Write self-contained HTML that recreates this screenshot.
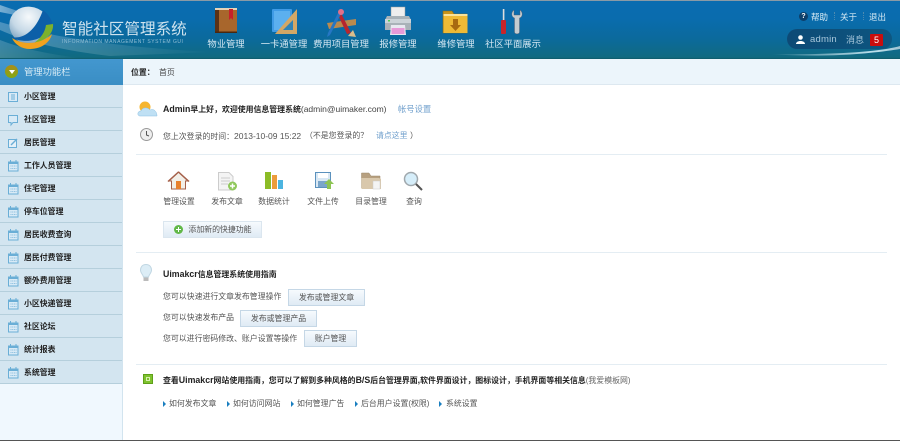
<!DOCTYPE html>
<html lang="zh"><head><meta charset="utf-8"><title>智能社区管理系统</title>
<style>
html,body{margin:0;padding:0;width:900px;height:441px;overflow:hidden;background:#fff}
body{position:relative;font-family:"Liberation Sans","Noto Sans CJK SC",sans-serif;font-size:7.9px;color:#555;filter:blur(.3px)}
.a{position:absolute;white-space:nowrap;line-height:12px}
svg{position:absolute;overflow:visible}
#hd{position:absolute;left:0;top:0;width:900px;height:59px;background:linear-gradient(#0a6cb0 0,#0a6cae 30%,#0b6a9c 65%,#116a80 97%,#0f5a68 100%);border-top:1px solid #8a9aa6;box-sizing:border-box;overflow:hidden}
.n{color:#d5e8f2;font-size:9.300px;text-align:center;top:37px}
.m{position:absolute;left:0;width:122px;height:22px;background:#d3e5f0;border-bottom:1px solid #b5cfdc}
.m span{position:absolute;left:24px;top:6px;font-size:7.900px;line-height:12px;color:#222;font-weight:bold;white-space:nowrap}
.m svg{left:8px;top:6px}
.q{color:#555;font-size:7.900px;text-align:center;top:196px;width:44px}
.b{position:absolute;box-sizing:border-box;background:linear-gradient(#f6fafd,#dfeaf4);border:1px solid #c5d7e6;color:#555;text-align:center;font-size:7.900px;white-space:nowrap}
.hr{position:absolute;left:136px;width:751px;height:1px;background:#e4edf3}
.k{font-weight:bold;color:#222}
.e{font-size:8.800px}
.f{font-size:8.500px}
.l{color:#555;top:398px}
.t{position:absolute;top:401px;width:0;height:0;border-left:3px solid #1a7fc0;border-top:3px solid transparent;border-bottom:3px solid transparent}
</style></head><body>
<svg width="0" height="0" style="left:0;top:0"><defs><g id="cal"><rect x=".5" y="2" width="9.500" height="9" fill="#d8eaf6" stroke="#6aaed6"/><rect x="0" y="1.500" width="10.500" height="2.500" fill="#6aaed6"/><path d="M2.500 0V2.500M8 0V2.500" stroke="#6aaed6"/><path d="M2.500 6H8.500M2.500 8.500H8.500" stroke="#8abede" stroke-dasharray="1 .7"/></g></defs></svg>
<div id="hd">
<svg style="left:0;top:-1px" width="900" height="59" viewBox="0 0 900 59">
<defs>
<linearGradient id="g1" x1="0" y1="0" x2="1" y2="0"><stop offset="0" stop-color="#fff" stop-opacity=".75"/><stop offset="1" stop-color="#fff" stop-opacity="0"/></linearGradient>
<radialGradient id="ball" cx=".38" cy=".3" r=".75"><stop offset="0" stop-color="#f6f9fb"/><stop offset=".55" stop-color="#c5d8e6"/><stop offset="1" stop-color="#6b97b8"/></radialGradient>
<linearGradient id="gl" x1="0" y1="0" x2="1" y2="0"><stop offset="0" stop-color="#fff" stop-opacity="0"/><stop offset=".8" stop-color="#cfeef8" stop-opacity=".9"/><stop offset="1" stop-color="#fff" stop-opacity=".6"/></linearGradient>
</defs>
<path d="M0 22Q80 46 215 52L110 56Q40 48 0 30Z" fill="url(#g1)" opacity=".35"/>
<path d="M0 5L50 22L0 12Z" fill="url(#g1)" opacity=".6"/>
<path d="M0 40Q30 52 80 58H0Z" fill="url(#g1)" opacity=".25"/>
<ellipse cx="30" cy="26" rx="21" ry="19" fill="url(#ball)" transform="rotate(25 30 26)"/>
<path d="M43 10C48 14 53 20 52 27C46 38 28 46 10 37C24 40 36 30 43 10Z" fill="#0d5fa8"/>
<path d="M46 25L53 24C54 33 46 41 34 43C41 38 45 32 46 25Z" fill="#7cb22c"/>
<path d="M12 38C24 46 42 44 52 34C50 42 42 49 30 49C22 49 15 45 12 38Z" fill="#f0a21e"/>
<path d="M770 54C830 55 880 52 900 46V49C870 54 820 58 770 54Z" fill="url(#gl)"/>
</svg>
<div class="a" style="left:62px;top:19px;font-size:15.600px;line-height:20px;color:#cfe3ee">智能社区管理系统</div>
<div class="a" style="left:62px;top:37px;font-size:5px;line-height:8px;color:#8fbdd4;letter-spacing:.53px">INFORMATION MANAGEMENT SYSTEM GUI</div>

<svg style="left:215px;top:7px" width="23" height="26"><rect width="22" height="25" rx="1" fill="#a8662c"/><rect width="4" height="25" fill="#5a3216"/><rect y="0" width="22" height="2" fill="#e4d3b8"/><path d="M14 1h4v11l-2-2-2 2z" fill="#c6202a"/><rect y="23.500" width="22" height="1.500" fill="#4a2810"/></svg>
<svg style="left:272px;top:8px" width="26" height="26"><rect width="20" height="23" rx="1" fill="#3f9be6"/><rect x="2" y="2" width="16" height="19" fill="#5cb0ef"/><path d="M25 0V25H3Z" fill="#d3a766"/><path d="M21 11V21H11Z" fill="#2e83b8"/></svg>
<svg style="left:326px;top:7px" width="32" height="30"><path d="M1 15L30 11V17L3 21Z" fill="#b98a4e"/><path d="M15 5L25 25L21 26L12 7Z" fill="#b8252e"/><path d="M27 22L30 29L22 28Z" fill="#d9bd8c"/><path d="M16 4L4 27L1 29L2 25L13 3Z" fill="#2676c4"/><circle cx="15" cy="4" r="3" fill="#e0708a"/></svg>
<svg style="left:384px;top:6px" width="28" height="29"><rect x="7" y="0" width="14" height="11" fill="#eee" stroke="#999" stroke-width=".5"/><path d="M3 9H25L27 13V23H1V13Z" fill="#a9b2b8"/><rect x="1" y="12" width="26" height="4" fill="#ccd3d8"/><rect x="4" y="13" width="2" height="1.500" fill="#5c5"/><path d="M7 18H21L22 28H6Z" fill="#e8e8f0"/><rect x="7.500" y="21" width="13" height="6" fill="#e79ad8"/></svg>
<svg style="left:442px;top:8px" width="27" height="25"><path d="M1 2H10L12 5H25V24H1Z" fill="#c9951c" stroke="#8a6a10" stroke-width=".6"/><rect x="1.500" y="7" width="24" height="17" fill="#eeba36"/><rect x="1.500" y="5" width="24" height="2" fill="#f9e29a"/><path d="M11 10H16V16H19L13.500 22L8 16H11Z" fill="#a86a10"/></svg>
<svg style="left:500px;top:8px" width="24" height="26"><rect x="2.800" y="0" width="1.600" height="11" fill="#ddd"/><rect x="1" y="11" width="5" height="14" rx="1" fill="#c9252a"/><path d="M14 1C11 3 11 8 14.500 9V23C14.500 25.500 19.500 25.500 19.500 23V9C23 8 23 3 20 1V6H14Z" fill="#c4ccd0" stroke="#556" stroke-width=".4"/></svg>

<div class="a n" style="left:196px;width:60px">物业管理</div>
<div class="a n" style="left:254px;width:60px">一卡通管理</div>
<div class="a n" style="left:311px;width:60px">费用项目管理</div>
<div class="a n" style="left:368px;width:60px">报修管理</div>
<div class="a n" style="left:426px;width:60px">维修管理</div>
<div class="a n" style="left:483px;width:60px">社区平面展示</div>

<div class="a" style="left:799px;top:11px;width:9px;height:9px;border-radius:5px;background:#0d3f6a;color:#fff;font-size:7px;line-height:9px;text-align:center;font-weight:bold">?</div>
<div class="a" style="left:811px;top:10px;color:#d9ebf4;font-size:8.500px">帮助</div>
<div class="a" style="left:833.500px;top:11px;width:1px;height:8px;border-left:1px dotted #4d8ab0;"></div>
<div class="a" style="left:840px;top:10px;color:#d9ebf4;font-size:8.500px">关于</div>
<div class="a" style="left:862.500px;top:11px;width:1px;height:8px;border-left:1px dotted #4d8ab0;"></div>
<div class="a" style="left:869px;top:10px;color:#d9ebf4;font-size:8.500px">退出</div>
<div class="a" style="left:787px;top:28px;width:105px;height:20px;border-radius:10px;background:linear-gradient(90deg,#0d4a76,#0d5680)"></div>
<svg style="left:796px;top:34px" width="9" height="9"><circle cx="4.500" cy="2.500" r="2.300" fill="#fff"/><path d="M0 9C0 5 9 5 9 9Z" fill="#fff"/></svg>
<div class="a" style="left:810px;top:33px;color:#a8c8dc;font-size:9.500px;letter-spacing:.2px">admin</div>
<div class="a" style="left:846px;top:33px;color:#a8c8dc;font-size:9px">消息</div>
<div class="a" style="left:870px;top:33px;width:13px;height:12px;background:#c90d0d;color:#fff;font-size:9px;text-align:center;border-radius:1px">5</div>
</div>

<!-- sidebar -->
<div class="a" style="left:0;top:59px;width:122px;height:382px;background:#f0f8fe;border-right:1px solid #d2e4ef"></div>
<div class="a" style="left:0;top:59px;width:123px;height:26px;background:linear-gradient(#4397cf,#3a8ec4)"></div>
<div class="a" style="left:5px;top:65px;width:13px;height:13px;border-radius:7px;background:linear-gradient(#a98d1c,#84a812)"></div>
<div class="a" style="left:9px;top:70px;width:0;height:0;border-left:3px solid transparent;border-right:3px solid transparent;border-top:4px solid #fff"></div>
<div class="a" style="left:24px;top:66px;color:#d8ebf5;font-size:9.300px">管理功能栏</div>

<div class="m" style="top:85px"><svg width="10" height="10" style="top:7px"><rect x=".5" y=".5" width="9" height="9" fill="#d8eaf6" stroke="#6aaed6"/><path d="M3 3H7M3 5H7M3 7H7" stroke="#6aaed6"/></svg><span>小区管理</span></div>
<div class="m" style="top:108px"><svg width="10" height="11" style="top:7px"><path d="M.5 .5H9.500V7.500H5L3 10V7.500H.5Z" fill="#d8eaf6" stroke="#6aaed6"/></svg><span>社区管理</span></div>
<div class="m" style="top:131px"><svg width="10" height="10" style="top:7px"><rect x=".5" y="1.500" width="8" height="8" fill="#e4f0f8" stroke="#6aaed6"/><path d="M3 7L9 1" stroke="#6aaed6" stroke-width="1.400"/></svg><span>居民管理</span></div>
<div class="m" style="top:154px"><svg width="11" height="11"><use href="#cal"/></svg><span>工作人员管理</span></div>
<div class="m" style="top:177px"><svg width="11" height="11"><use href="#cal"/></svg><span>住宅管理</span></div>
<div class="m" style="top:200px"><svg width="11" height="11"><use href="#cal"/></svg><span>停车位管理</span></div>
<div class="m" style="top:223px"><svg width="11" height="11"><use href="#cal"/></svg><span>居民收费查询</span></div>
<div class="m" style="top:246px"><svg width="11" height="11"><use href="#cal"/></svg><span>居民付费管理</span></div>
<div class="m" style="top:269px"><svg width="11" height="11"><use href="#cal"/></svg><span>额外费用管理</span></div>
<div class="m" style="top:292px"><svg width="11" height="11"><use href="#cal"/></svg><span>小区快递管理</span></div>
<div class="m" style="top:315px"><svg width="11" height="11"><use href="#cal"/></svg><span>社区论坛</span></div>
<div class="m" style="top:338px"><svg width="11" height="11"><use href="#cal"/></svg><span>统计报表</span></div>
<div class="m" style="top:361px"><svg width="11" height="11"><use href="#cal"/></svg><span>系统管理</span></div>

<!-- breadcrumb -->
<div class="a" style="left:123px;top:59px;width:777px;height:25px;background:#ecf5fb;border-bottom:1px solid #dde8f0"></div>
<div class="a" style="left:131px;top:67px;color:#222;font-size:7.900px;font-weight:bold">位置：</div>
<div class="a" style="left:159px;top:67px;color:#444;font-size:7.900px">首页</div>

<!-- welcome -->
<svg style="left:137px;top:100px" width="21" height="17"><circle cx="8" cy="7" r="5.500" fill="#f6b52e"/><path d="M3 16C0 16 0 11 4 11C5 7 11 7 13 10C17 8 20 12 20 16Z" fill="#bfe0f4" stroke="#8cc0e2" stroke-width=".5"/></svg>
<div class="a k" style="left:163px;top:103px"><span class="e">Admin</span>早上好，欢迎使用信息管理系统<span class="f" style="font-weight:normal;color:#444">(admin@uimaker.com)</span></div>
<div class="a" style="left:398px;top:103px;color:#6f9fcc;font-size:8.300px">帐号设置</div>
<svg style="left:140px;top:128px" width="13" height="13"><circle cx="6.500" cy="6.500" r="6" fill="#eee" stroke="#999"/><path d="M6.500 3V7L9 8" stroke="#555" fill="none"/></svg>
<div class="a" style="left:163px;top:130px;color:#555">您上次登录的时间：<span class="f">2013-10-09 15:22</span></div>
<div class="a" style="left:305px;top:130px;color:#555">（不是您登录的？</div>
<div class="a" style="left:376px;top:130px;color:#6f9fcc">请点这里</div>
<div class="a" style="left:410px;top:130px;color:#555">）</div>
<div class="hr" style="top:154px"></div>

<!-- quick icons -->
<svg style="left:168px;top:171px" width="21" height="19"><path d="M10.500 1L1 10H3.500V18H17.500V10H20Z" fill="#f2efe8" stroke="#a5604a"/><path d="M10.500 1L0 10.500M10.500 1L21 10.500" stroke="#a5604a" stroke-width="1.500" fill="none"/><rect x="8" y="10" width="5" height="8" fill="#e8802c"/></svg>
<svg style="left:218px;top:172px" width="20" height="19"><path d="M.5 .5H11L15 4.500V18H.5Z" fill="#f4f4f4" stroke="#ccc"/><path d="M3 6H12M3 9H12M3 12H10" stroke="#ccc"/><circle cx="14.500" cy="14" r="4.500" fill="#90c85c"/><path d="M14.500 11.500V16.500M12 14H17" stroke="#fff" stroke-width="1.500"/></svg>
<svg style="left:265px;top:171px" width="19" height="19"><rect x="0" y="1" width="6" height="17" fill="#8cbc26"/><rect x="7" y="4" width="5" height="14" fill="#ec9c3c"/><rect x="13" y="9" width="5" height="9" fill="#4cb4e0"/></svg>
<svg style="left:315px;top:172px" width="19" height="18"><rect x=".5" y=".5" width="15" height="15" fill="#d9e8f4" stroke="#5b91bd"/><rect x="3" y="1" width="10" height="5" fill="#fff"/><rect x="3" y="9" width="10" height="6" fill="#7aa5c9"/><path d="M14 7L19 12H16V17H12V12H9Z" fill="#8dc452"/></svg>
<svg style="left:361px;top:172px" width="21" height="18"><path d="M.5 1H8L10 4H19V16H.5Z" fill="#b7a080" stroke="#9a8668" stroke-width=".5"/><path d="M.5 6H18L20 7V17H.5Z" fill="#d9c8ac"/><rect x="12" y="9" width="7" height="8" fill="#f4f4f4" stroke="#ccc" stroke-width=".5"/></svg>
<svg style="left:403px;top:171px" width="20" height="20"><circle cx="8" cy="8" r="6.500" fill="#d6eefa" stroke="#a0a8ad" stroke-width="1.500"/><path d="M13 13L19 19" stroke="#555" stroke-width="2"/></svg>

<div class="a q" style="left:157px">管理设置</div>
<div class="a q" style="left:205px">发布文章</div>
<div class="a q" style="left:252px">数据统计</div>
<div class="a q" style="left:301px">文件上传</div>
<div class="a q" style="left:349px">目录管理</div>
<div class="a q" style="left:392px">查询</div>

<div class="b" style="left:163px;top:221px;width:99px;height:17px;line-height:15px;padding-left:15px;border-color:#dbe6ef">添加新的快捷功能</div>
<svg style="left:174px;top:225px" width="9" height="9"><circle cx="4.500" cy="4.500" r="4.500" fill="#62b848"/><path d="M4.500 2V7M2 4.500H7" stroke="#fff"/></svg>
<div class="hr" style="top:252px"></div>

<!-- guide -->
<svg style="left:140px;top:264px" width="12" height="18"><path d="M6 .5C2 .5 .5 3.500 .5 6C.5 9 3 10.500 3.500 13H8.500C9 10.500 11.500 9 11.500 6C11.500 3.500 10 .5 6 .5Z" fill="#dcedf6" stroke="#c0d6e2"/><rect x="3.500" y="13.500" width="5" height="3.500" fill="#bbb"/></svg>
<div class="a k" style="left:163px;top:268px"><span class="e">Uimakcr</span>信息管理系统使用指南</div>
<div class="a" style="left:163px;top:291px">您可以快速进行文章发布管理操作</div>
<div class="b" style="left:288px;top:289px;width:77px;height:17px;line-height:16px">发布或管理文章</div>
<div class="a" style="left:163px;top:312px">您可以快速发布产品</div>
<div class="b" style="left:240px;top:310px;width:77px;height:17px;line-height:16px">发布或管理产品</div>
<div class="a" style="left:163px;top:333px">您可以进行密码修改、账户设置等操作</div>
<div class="b" style="left:304px;top:330px;width:53px;height:17px;line-height:16px">账户管理</div>
<div class="hr" style="top:364px"></div>

<!-- footer section -->
<div class="a" style="left:143px;top:374px;width:10px;height:10px;background:#7ec22e;border:1px solid #5ea018;box-sizing:border-box"></div>
<div class="a" style="left:146px;top:377px;width:4px;height:4px;border:1px solid #d8f0b0;box-sizing:border-box"></div>
<div class="a k" style="left:163px;top:374px">查看<span class="e">Uimakcr</span>网站使用指南，您可以了解到多种风格的<span class="e">B/S</span>后台管理界面<span class="e">,</span>软件界面设计，图标设计，手机界面等相关信息<span style="font-weight:normal;color:#666">(我爱模板网)</span></div>
<div class="t" style="left:163px"></div><div class="a l" style="left:169px">如何发布文章</div>
<div class="t" style="left:227px"></div><div class="a l" style="left:233px">如何访问网站</div>
<div class="t" style="left:291px"></div><div class="a l" style="left:297px">如何管理广告</div>
<div class="t" style="left:355px"></div><div class="a l" style="left:361px">后台用户设置(权限)</div>
<div class="t" style="left:439px"></div><div class="a l" style="left:446px">系统设置</div>

<div class="a" style="left:0;top:440px;width:900px;height:1px;background:#555"></div>
</body></html>
